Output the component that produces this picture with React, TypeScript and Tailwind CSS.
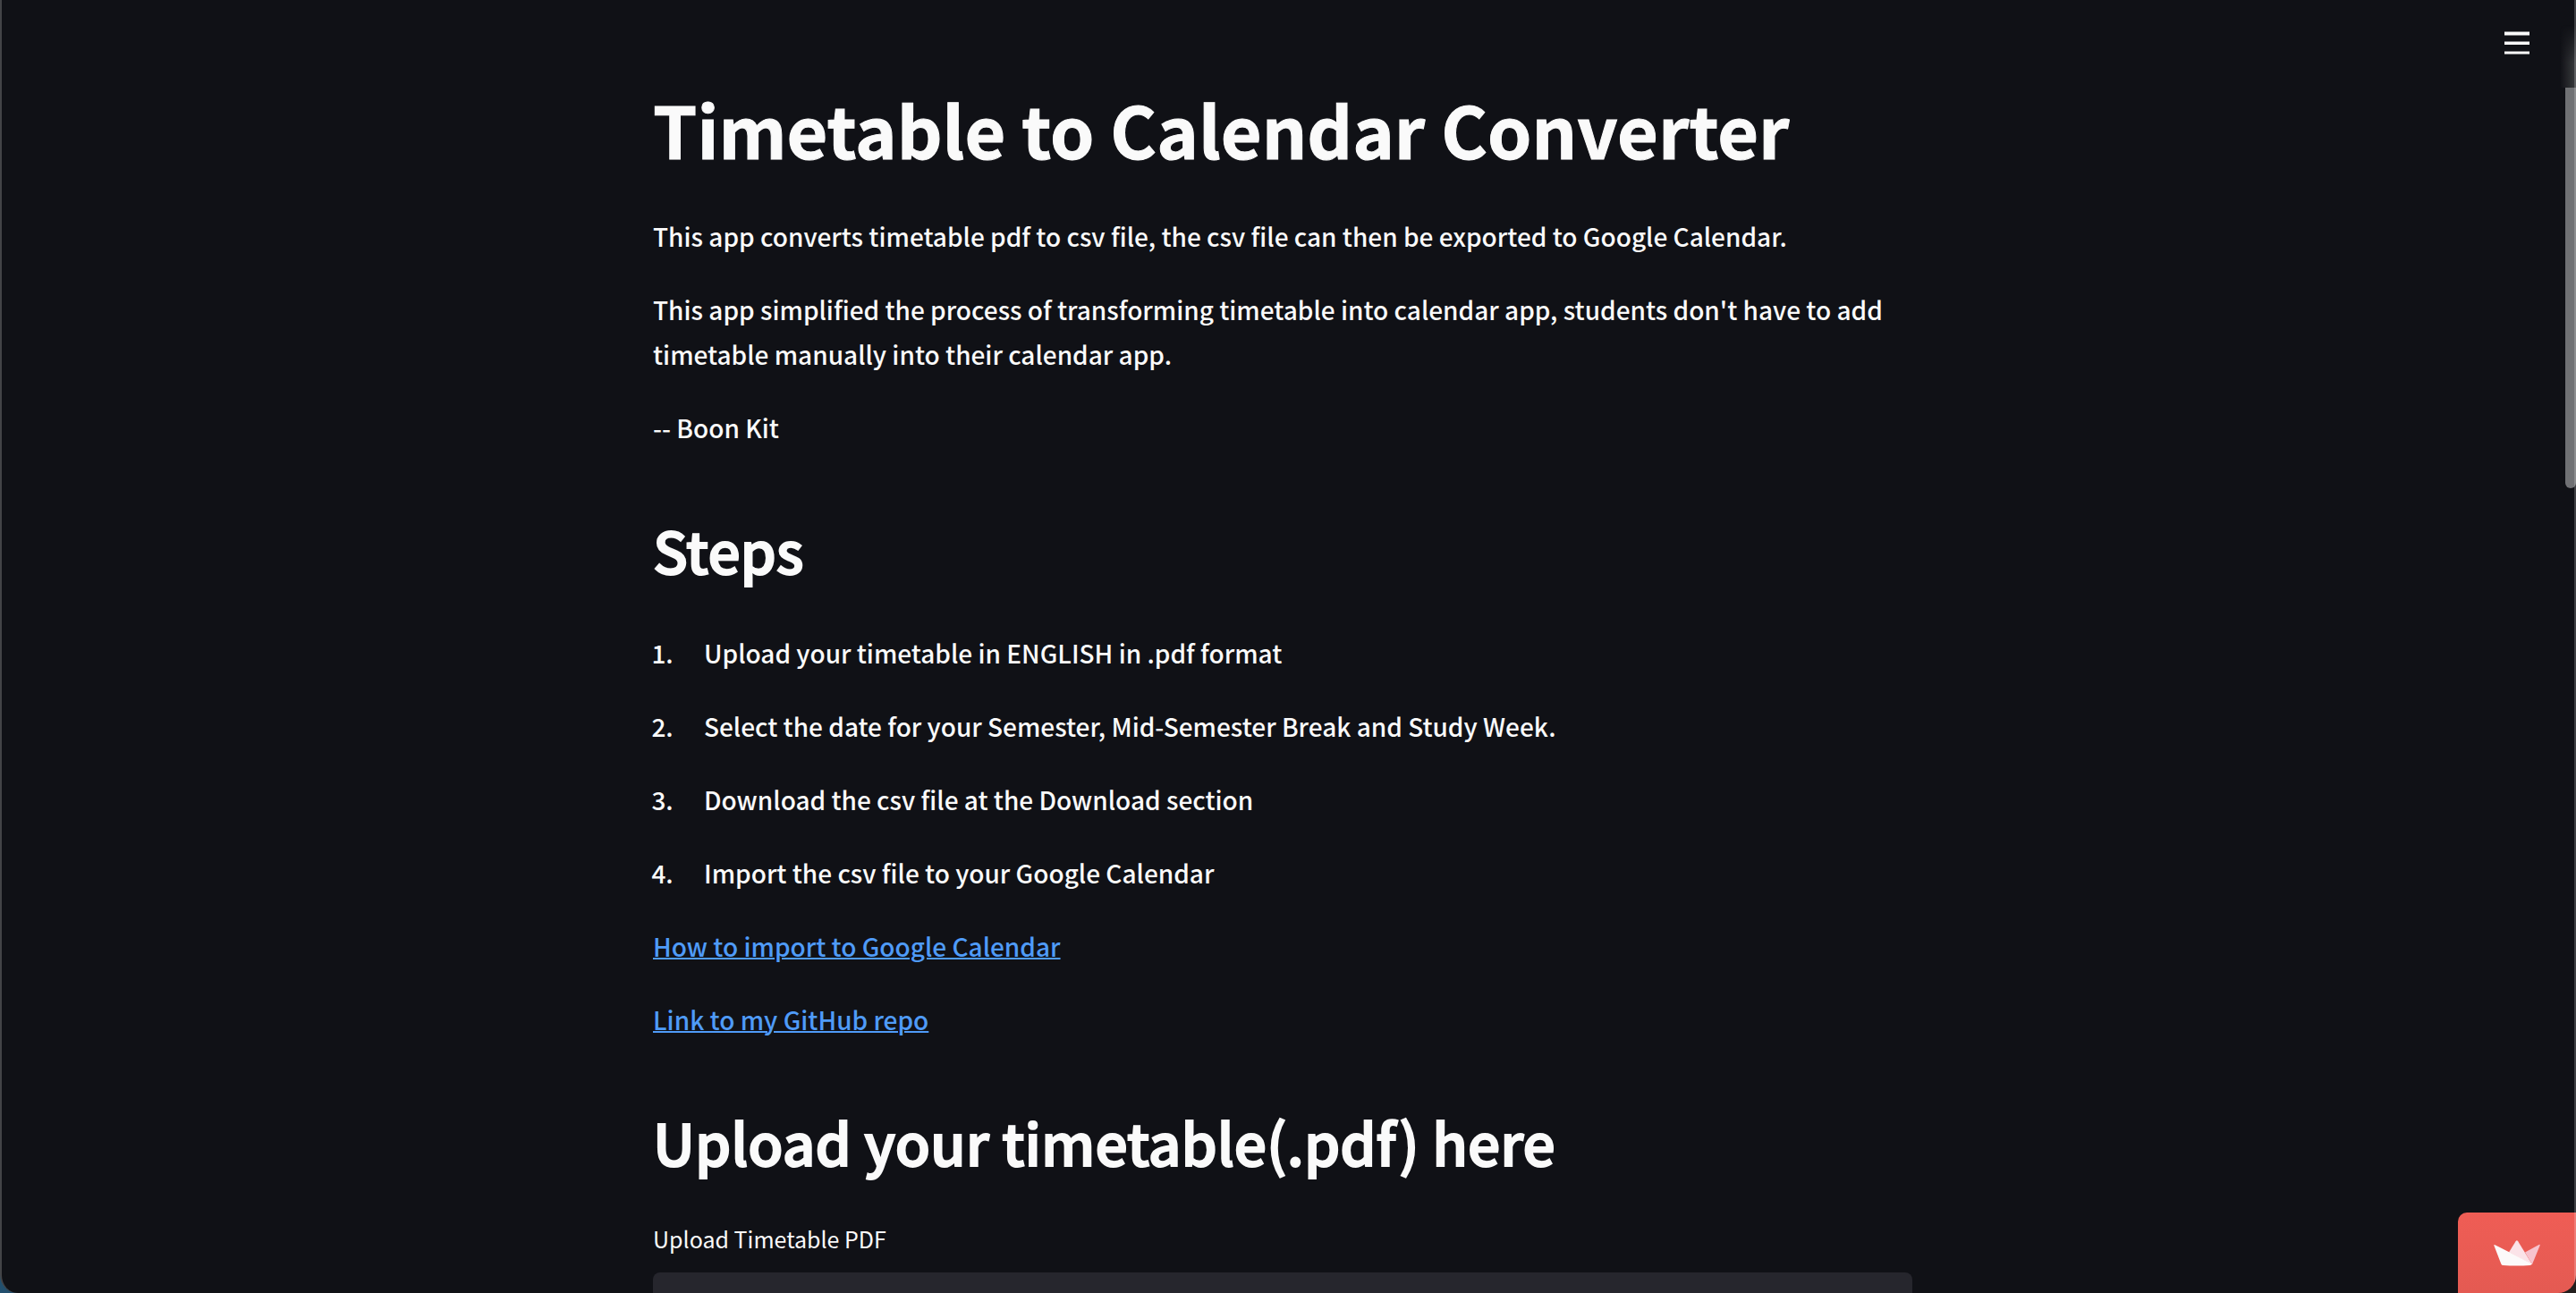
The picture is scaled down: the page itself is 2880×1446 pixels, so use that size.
import React from "react";

const steps = [
  "Upload your timetable in ENGLISH in .pdf format",
  "Select the date for your Semester, Mid-Semester Break and Study Week.",
  "Download the csv file at the Download section",
  "Import the csv file to your Google Calendar",
];

const links = ["How to import to Google Calendar", "Link to my GitHub repo"];

function SectionTitle({ children }: { children: React.ReactNode }) {
  return (
    <h2 className="mt-[73px] mb-[53px] text-[64px] leading-[76px] font-medium [-webkit-text-stroke:2px_#fafafa]">
      {children}
    </h2>
  );
}

function MenuButton() {
  return (
    <button type="button" aria-label="Menu" className="absolute top-7 right-[46px] flex h-10 w-10 items-center justify-center">
      <svg viewBox="0 0 28 26" className="w-7" fill="#fafafa" aria-hidden="true">
        <path d="M0 .5h28v4H0zM0 11.5h28v3.6H0zM0 22.5h28v3H0z" />
      </svg>
    </button>
  );
}

function HostBadge() {
  return (
    <a
      href="#streamlit"
      aria-label="Hosted with Streamlit"
      className="absolute right-0 bottom-0 flex h-[90px] w-[132px] items-center justify-center rounded-tl-[10px] bg-linear-to-b from-[#ef5d55] to-[#e45a52]"
    >
      <svg viewBox="0 0 52 29" className="w-[52px]" aria-hidden="true">
        <path d="M17 13.4 24.6 1.2q1.3-1.9 2.6 0L43 27z" fill="#fbe3e8" />
        <path d="M35 13.5 50.6 5q1.6-.6 1 1L43 27z" fill="#f7c3cd" />
        <path d="M.4 6Q0 4.600 1.400 5.200L43 26.600q-1 1.400-2.500 1.400-15 1-30 0-1.600 0-2.200-1.600z" fill="#fcfafa" />
      </svg>
    </a>
  );
}

export default function App() {
  return (
    <div className="h-screen overflow-hidden bg-linear-to-r from-[#22506f] to-[#241f1e] to-10%">
      <div className="relative h-full overflow-hidden rounded-b-[20px] border-l-2 border-[#434447] bg-[#101116] font-['Noto_Sans_CJK_SC','Noto_Sans',sans-serif] text-[28px] leading-[50px] font-medium text-[#fafafa]">
        <main className="pt-24 pr-[14px]">
          <div className="mx-auto max-w-[1408px]">
            <h1 className="mb-[47px] text-[79px] leading-24 font-bold [-webkit-text-stroke:1px_#fafafa]">
              Timetable to Calendar Converter
            </h1>
            <div className="flex flex-col gap-8">
              <p>This app converts timetable pdf to csv file, the csv file can then be exported to Google Calendar.</p>
              <p>
                This app simplified the process of transforming timetable into calendar app, students don't have to add
                timetable manually into their calendar app.
              </p>
              <p>-- Boon Kit</p>
            </div>

            <SectionTitle>Steps</SectionTitle>
            <ol className="flex list-decimal flex-col gap-8 pl-[29px]">
              {steps.map((step) => (
                <li key={step} className="pl-7">
                  {step}
                </li>
              ))}
            </ol>
            <div className="mt-8 flex flex-col items-start gap-8">
              {links.map((link) => (
                <a key={link} href="#" className="text-[#4f9bf8] underline decoration-2">
                  {link}
                </a>
              ))}
            </div>

            <SectionTitle>Upload your timetable(.pdf) here</SectionTitle>
            <label htmlFor="timetable" className="block text-[25px] leading-9 font-normal">
              Upload Timetable PDF
            </label>
            <div className="mt-5 h-36 rounded-lg bg-[#26262d]">
              <input id="timetable" type="file" accept=".pdf" className="h-full w-full opacity-0" />
            </div>
          </div>
        </main>

        <MenuButton />
        <HostBadge />
        <div className="absolute top-7 right-0 h-[70px] w-[18px] bg-linear-to-l from-[#3a3b3e] to-transparent [mask-image:linear-gradient(to_bottom,transparent,black_60%)]" />
        <div className="absolute top-[98px] right-0 h-[448px] w-3 rounded-b-md bg-[#707174]" />
        <div className="absolute top-0 right-0 h-full w-[2px] bg-white/20" />
      </div>
    </div>
  );
}
